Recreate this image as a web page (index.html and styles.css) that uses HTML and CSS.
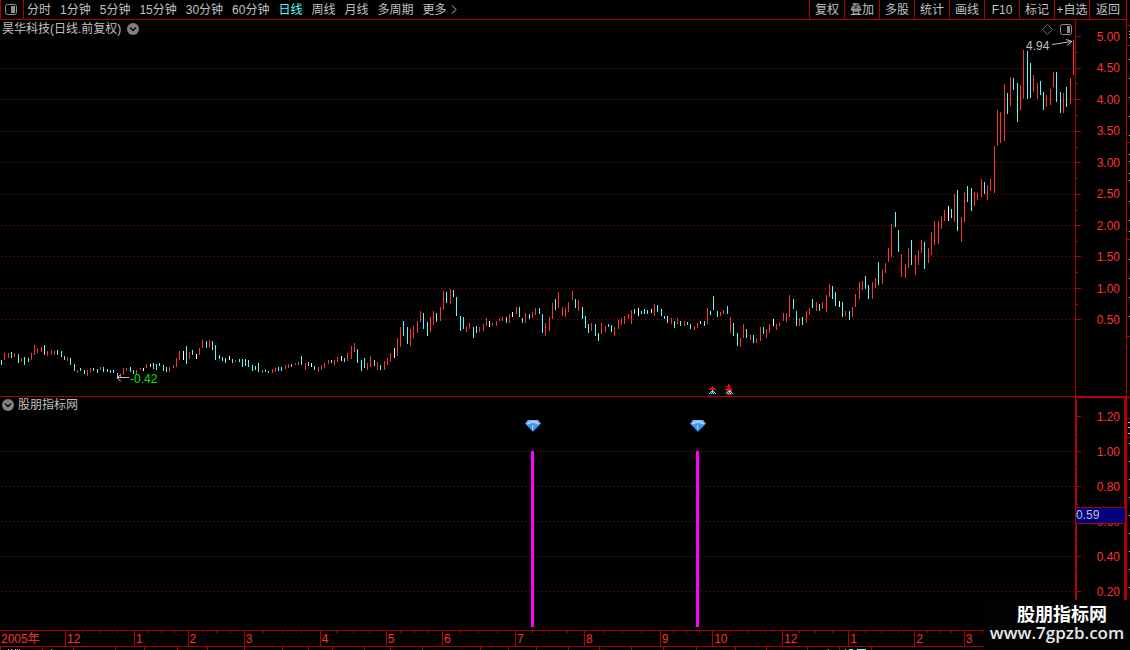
FILE: index.html
```html
<!DOCTYPE html>
<html lang="zh-CN">

<head>
    <meta charset="UTF-8">
    <meta name="viewport" content="width=device-width, initial-scale=1.0">
    <title>昊华科技</title>
    <link rel="stylesheet" href="styles.css">
</head>

<body>
    <div class="app">
        <header class="toolbar">
            <button class="layout-button" aria-label="布局">
                <svg width="12" height="11" viewBox="0 0 12 11">
                    <rect x="0.5" y="0.5" width="11" height="10" rx="2" fill="none" stroke="#909090" />
                    <rect x="6" y="2" width="4" height="7" fill="#909090" />
                </svg>
            </button>
            <nav class="periods">
                <a href="#">分时</a>
                <a href="#">1分钟</a>
                <a href="#">5分钟</a>
                <a href="#">15分钟</a>
                <a href="#">30分钟</a>
                <a href="#">60分钟</a>
                <a href="#" class="active">日线</a>
                <a href="#">周线</a>
                <a href="#">月线</a>
                <a href="#">多周期</a>
                <a href="#" class="more">更多
                    <svg width="6" height="9" viewBox="0 0 6 9">
                        <path d="M1 0.5l4 4l-4 4" fill="none" stroke="#c0c0c0" />
                    </svg>
                </a>
            </nav>
            <div class="tools">
                <button>复权</button>
                <button>叠加</button>
                <button>多股</button>
                <button>统计</button>
                <button>画线</button>
                <button>F10</button>
                <button>标记</button>
                <button>+自选</button>
                <button>返回</button>
            </div>
        </header>

        <section class="panel price-panel">
            <div class="plot">
                <svg class="chart" viewBox="0 20 1075 376">
                    <g class="grid">
                        <path
                            d="M1 68.5H1075M1 99.5H1075M1 131.5H1075M1 162.5H1075M1 194.5H1075M1 225.5H1075M1 256.5H1075M1 288.5H1075M1 319.5H1075" />
                    </g>
                    <g id="bars" class="bars"></g>

                    <!-- high and low markers -->
                    <path class="pointer" d="M1052 44.5l20 -3M1066 39.5l6 2l-5 4" />
                    <text class="high" x="1026" y="50">4.94</text>
                    <path class="pointer" d="M129 377.5h-12M121 374.5l-4 3l4 4M117.5 374v4" />
                    <text class="low" x="130" y="383">-0.42</text>

                    <!-- event markers -->
                    <path class="event-red" d="M712 386h1v1h1v1h1v1h1v1h-7v-1h1v-1h1v-1h1z" />
                    <path class="event-cyan" d="M712 390h1v1h1v1h1v1h1v1h-7v-1h1v-1h1v-1h1z" />
                    <path class="event-red" d="M728 384h1v1h1v1h1v1h-1v1h1v1h1v1h-7v-1h2v-1h1v-1h-2v-1h2z" />
                    <path class="event-red" d="M726 390h6v5h-5z" />
                    <path class="event-cyan" d="M729 390h1v1h1v1h1v1h1v1h-7v-1h1v-1h1v-1h1z" />
                    <path class="event-blue"
                        d="M711 392.5h1m1 0h1M710 393.5h1m1 0h1m1 0h1M728 392.5h1m1 0h1M727 393.5h1m1 0h1m1 0h1" />
                </svg>
                <div class="panel-title">
                    <h1>昊华科技(日线.前复权)</h1>
                    <button class="round" aria-label="展开">
                        <svg width="12" height="12" viewBox="0 0 12 12">
                            <circle cx="6" cy="6" r="6" fill="#808080" />
                            <path d="M3 4.5l3 3l3 -3" fill="none" stroke="#000" stroke-width="1.3" />
                        </svg>
                    </button>
                </div>
                <div class="panel-icons">
                    <svg width="11" height="11" viewBox="0 0 11 11">
                        <path d="M5.5 0.5l5 5l-5 5l-5 -5z" fill="none" stroke="#707070" />
                    </svg>
                    <svg width="12" height="11" viewBox="0 0 12 11">
                        <rect x="0.5" y="0.5" width="11" height="10" rx="2" fill="none" stroke="#909090" />
                        <rect x="7" y="2" width="3" height="7" fill="#909090" />
                    </svg>
                </div>
            </div>
            <div class="scale">
                <svg class="ticks" width="6" height="376" viewBox="0 20 6 376">
                    <path
                        d="M0 36.5h5M0 52.5h2M0 68.5h5M0 83.5h2M0 99.5h5M0 115.5h2M0 131.5h5M0 147.5h2M0 162.5h5M0 178.5h2M0 194.5h5M0 210.5h2M0 225.5h5M0 241.5h2M0 256.5h5M0 272.5h2M0 288.5h5M0 304.5h2M0 319.5h5" />
                </svg>
                <ol class="labels price-labels">
                    <li>5.00</li>
                    <li>4.50</li>
                    <li>4.00</li>
                    <li>3.50</li>
                    <li>3.00</li>
                    <li>2.50</li>
                    <li>2.00</li>
                    <li>1.50</li>
                    <li>1.00</li>
                    <li>0.50</li>
                </ol>
            </div>
        </section>

        <section class="panel indicator-panel">
            <div class="plot">
                <svg class="chart" viewBox="0 397 1075 233">
                    <defs>
                        <linearGradient id="gem" x1="0" y1="0" x2="0" y2="1">
                            <stop offset="0" stop-color="#8fb4f4" />
                            <stop offset="0.5" stop-color="#3c96f0" />
                            <stop offset="1" stop-color="#2a6fd8" />
                        </linearGradient>
                        <symbol id="diamond" viewBox="0 0 16 12">
                            <path d="M3 0h10l3 3.5L8 12L0 3.5z" fill="url(#gem)" />
                            <path d="M2.5 4Q8 -0.5 13.5 4" fill="none" stroke="#d8eaff" stroke-width="1.2" />
                            <path d="M4 5.5L8 3.5L12 5.5L8 11z" fill="#2f9bf5" />
                            <path d="M7.5 5v5" stroke="#a8d8ff" />
                        </symbol>
                    </defs>
                    <g class="grid">
                        <path
                            d="M1 451.5H1075M1 486.5H1075M1 521.5H1075M1 556.5H1075M1 591.5H1075" />
                    </g>
                    <rect class="signal" x="531" y="451" width="3" height="176" />
                    <rect class="signal" x="696" y="451" width="3" height="176" />
                    <use href="#diamond" x="525" y="420" width="16" height="12" />
                    <use href="#diamond" x="690" y="420" width="16" height="12" />
                </svg>
                <div class="panel-title indicator-title">
                    <button class="round" aria-label="展开">
                        <svg width="12" height="12" viewBox="0 0 12 12">
                            <circle cx="6" cy="6" r="6" fill="#808080" />
                            <path d="M3 4.5l3 3l3 -3" fill="none" stroke="#000" stroke-width="1.3" />
                        </svg>
                    </button>
                    <h2>股朋指标网</h2>
                </div>
            </div>
            <div class="scale">
                <svg class="ticks" width="6" height="233" viewBox="0 397 6 233">
                    <path
                        d="M0 416.5h4M0 434.5h1M0 451.5h4M0 469.5h1M0 486.5h4M0 504.5h1M0 521.5h4M0 539.5h1M0 556.5h4M0 574.5h1M0 591.5h4M0 609.5h1" />
                </svg>
                <ol class="labels indicator-labels">
                    <li>1.20</li>
                    <li>1.00</li>
                    <li>0.80</li>
                    <li>0.60</li>
                    <li>0.40</li>
                    <li>0.20</li>
                </ol>
                <div class="current-value">0.59</div>
            </div>
        </section>

        <ol class="timeline" id="timeline"></ol>

        <svg class="ticker" viewBox="0 647 1126 3">
            <path class="ticker-red"
                d="M0.5 647v3M42.5 647v3M73.5 647v3M115.5 647v3M144.5 647v3M177.5 647v3M207.5 647v3M244.5 647v3M282.5 647v3M308.5 647v3M332.5 647v3M364.5 647v3M390.5 647v3M422.5 647v3M480.5 647v3M508.5 647v3M536.5 647v3M568.5 647v3M599.5 647v3M631.5 647v3M663.5 647v3M696.5 647v3M735.5 647v3M766.5 647v3M807.5 647v3M839.5 647v3M871.5 647v3" />
            <path class="ticker-grey" d="M8 649.5h1m2 0h1m3 0h1m1 0h1m1 0h1m31 0h1M828 649.5h1m16 0h1" />
            <path class="ticker-cyan" d="M849 649.5h4m4 0h9" />
        </svg>
    </div>

    <div class="edge">
        <svg width="3" height="650" viewBox="0 0 3 650">
            <path class="ticker-red" d="M0 25.5h3M0 45.5h3M0 142.5h3M0 239.5h3M0 336.5h3M0 397.5h3M0 418.5h3M0 437.5h3" />
            <path class="ticker-grey"
                d="M2 31.5h1M2 34.5h1M2 37.5h1M2 59.5h1M2 78.5h1M2 97.5h1M2 116.5h1M2 135.5h1M2 154.5h1M2 161.5h1M2 173.5h1M2 180.5h1M2 201.5h1M2 220.5h1M2 231.5h1M2 259.5h1M2 278.5h1M2 297.5h1M2 316.5h1M1 422.5h2M1 427.5h2M1 433.5h2M2 443.5h1M2 461.5h1M2 479.5h1M2 497.5h1M2 515.5h1M2 533.5h1M2 551.5h1M2 569.5h1M2 587.5h1" />
        </svg>
    </div>

    <div class="watermark">
        <strong>股朋指标网</strong>
        <span>www.7gpzb.com</span>
    </div>

    <script src="chart.js"></script>
</body>

</html>
```

FILE: styles.css
```css
:root {
    --line: #b00000;
    --grid: #9c0c0c;
    --red: #ff3232;
    --cyan: #54fcfc;
    --text: #c0c0c0;
}

* {
    box-sizing: border-box;
}

body {
    display: flex;
    position: relative;
    min-height: 100vh;
    margin: 0;
    background: #000;
    color: var(--text);
    font-family: "Liberation Sans", "Noto Sans CJK SC", sans-serif;
    font-size: 12px;
    line-height: 16px;
}

svg {
    display: block;
}

h1,
h2 {
    margin: 0;
    font-size: 12px;
    font-weight: normal;
}

ol {
    list-style: none;
    margin: 0;
    padding: 0;
}

a {
    color: inherit;
    text-decoration: none;
}

button {
    padding: 0;
    border: 0;
    background: none;
    color: inherit;
    font: inherit;
    cursor: pointer;
}

.app {
    flex: 1;
    min-width: 0;
    display: flex;
    flex-direction: column;
}

/* toolbar */
.toolbar {
    display: flex;
    height: 20px;
    border-bottom: 1px solid var(--line);
}

.layout-button {
    display: flex;
    align-items: center;
    padding-left: 4px;
    width: 24px;
    border: solid var(--line);
    border-width: 0 1px;
}

.periods {
    display: flex;
    flex: 1;
    align-items: center;
    gap: 9px;
    padding-left: 3px;
    white-space: nowrap;
}

.periods .active {
    color: var(--cyan);
}

.more {
    display: flex;
    align-items: center;
    gap: 4px;
}

.tools {
    display: flex;
}

.tools button {
    width: 35px;
    border-left: 1px solid var(--line);
    white-space: nowrap;
}

.tools button:last-child {
    width: 37px;
}

/* panels */
.panel {
    display: flex;
}

.price-panel {
    border-bottom: 1px solid var(--line);
}

.plot {
    position: relative;
    flex: 1;
    min-width: 0;
}

.chart {
    width: 100%;
}

.grid path {
    fill: none;
    stroke: var(--grid);
    stroke-dasharray: 1 3;
}

.bars {
    shape-rendering: crispEdges;
}

.up {
    fill: var(--red);
}

.down {
    fill: var(--cyan);
}

.flat {
    fill: #fff;
}

.pointer {
    fill: none;
    stroke: var(--text);
}

.high {
    fill: var(--text);
}

.low {
    fill: #00e600;
}

.event-red {
    fill: #f00;
}

.event-cyan {
    fill: var(--cyan);
}

.event-blue {
    stroke: #0020c0;
}

.signal {
    fill: #f0f;
}

.panel-title {
    position: absolute;
    top: 1px;
    left: 2px;
    display: flex;
    align-items: center;
    gap: 6px;
}

.indicator-title {
    top: 0;
    gap: 4px;
}

.panel-icons {
    position: absolute;
    top: 4px;
    right: 3px;
    display: flex;
    gap: 7px;
}

/* value scales */
.scale {
    position: relative;
    display: flex;
    justify-content: space-between;
    width: 51px;
    border-left: 1px solid var(--line);
}

.ticks {
    fill: none;
    stroke: var(--line);
}

.labels {
    display: flex;
    flex-direction: column;
    justify-content: space-between;
    padding-right: 6px;
    color: var(--red);
}

.price-labels {
    height: 299px;
    margin-top: 9px;
}

.indicator-panel .scale {
    border: solid var(--line);
    border-width: 0 2px;
    box-shadow: inset 0 1px var(--line);
}

.indicator-labels {
    height: 191px;
    margin-top: 12px;
    padding-right: 4px;
}

.current-value {
    position: absolute;
    top: 110px;
    left: -1px;
    right: -1px;
    height: 17px;
    border: solid var(--line);
    border-width: 1px 0;
    background: #000080;
    line-height: 15px;
}

/* dates */
.timeline {
    display: flex;
    height: 17px;
    border: solid var(--line);
    border-width: 1px 0;
    color: var(--red);
}

.month {
    flex-basis: 0;
    min-width: 0;
    position: relative;
    padding-left: 1px;
    border-left: 1px solid var(--line);
}

.month:first-child {
    border-left: 0;
}

.weeks {
    position: absolute;
    inset: 0;
    display: flex;
    justify-content: space-evenly;
}

.weeks i {
    width: 1px;
    height: 2px;
    background: var(--line);
}

.ticker {
    width: 100%;
}

.ticker-red {
    stroke: var(--line);
}

.ticker-grey {
    stroke: var(--text);
}

.ticker-cyan {
    stroke: var(--cyan);
}

.edge {
    width: 4px;
    border-left: 1px solid var(--line);
}

.watermark {
    position: absolute;
    right: 0;
    bottom: 0;
    display: flex;
    flex-direction: column;
    align-items: center;
    width: 146px;
    height: 50px;
    padding-top: 3px;
    background: #030303;
    color: #fff;
}

.watermark strong {
    padding-left: 10px;
    font-family: "Noto Sans CJK SC", sans-serif;
    font-size: 18px;
    line-height: 20px;
}

.watermark span {
    font-family: "Open Sans", sans-serif;
    font-size: 17px;
    font-weight: 600;
    line-height: 20px;
    color: #e8e8e8;
}
```

FILE: chart.js
```js
// x, high, low, direction: u = up, d = down, f = flat
const data = `
1 360 365 d,4 353 360 u,8 353 358 u,11 352 358 d,14 353 357 u,18 354 363 d,21 358 362 u,24 357 365 d,28 358 362 d,31 353 360 u,
34 345 355 u,37 348 353 u,41 347 352 u,44 345 355 d,47 351 356 u,51 350 355 u,54 351 355 u,57 350 355 d,61 351 357 d,64 356 360 d,
67 357 361 u,70 358 365 d,74 364 371 d,77 370 373 u,80 368 371 d,84 370 374 d,87 370 376 u,90 368 372 u,93 368 371 d,97 369 373 d,
100 367 370 u,103 367 372 d,107 369 372 d,110 370 373 d,113 370 373 d,117 373 379 d,120 374 378 u,123 368 375 u,126 368 371 u,130 367 372 d,
133 370 374 d,136 370 374 u,140 368 370 u,143 368 371 f,146 364 368 u,150 364 367 f,153 363 369 d,156 364 370 d,159 363 366 d,163 365 371 d,
166 367 372 d,169 367 372 u,173 365 368 u,176 358 367 u,179 351 360 u,183 351 360 f,186 346 364 d,189 352 359 u,192 350 355 d,196 354 359 f,
199 348 355 u,202 340 348 u,206 341 348 d,209 340 348 u,212 341 350 d,215 345 360 d,219 355 359 d,222 357 361 d,225 358 363 d,229 356 360 f,
232 359 363 d,235 360 362 u,239 359 362 d,242 359 367 d,245 359 366 d,248 360 367 d,252 365 371 d,255 366 370 d,258 363 372 d,262 370 373 u,
265 370 372 d,268 371 373 d,272 369 373 u,275 368 372 u,278 367 371 d,281 367 371 d,285 365 369 u,288 364 368 u,291 364 367 d,295 363 365 u,
298 362 365 u,301 356 365 d,305 363 370 u,308 362 366 d,311 363 367 f,314 366 370 d,318 367 372 u,321 365 370 u,324 363 368 u,328 360 364 u,
331 360 363 d,334 360 365 u,337 357 362 u,341 356 361 f,344 358 362 d,347 353 361 u,351 346 359 u,354 343 352 u,357 349 363 d,361 360 371 d,
364 358 368 d,367 363 370 u,370 356 367 u,374 360 366 d,377 362 370 u,380 365 370 d,384 361 370 u,387 358 365 u,390 353 362 u,394 348 358 f,
397 338 356 u,400 327 347 u,403 321 336 d,407 327 344 d,410 329 346 u,413 326 338 u,417 321 333 u,420 311 322 u,423 313 329 d,427 322 336 d,
430 317 332 u,433 311 325 u,436 313 322 d,440 307 321 u,443 291 310 u,446 292 303 d,450 289 304 u,453 290 297 d,456 297 316 d,460 316 331 d,
463 317 329 d,466 326 332 u,469 323 329 u,473 327 338 d,476 326 333 d,479 327 332 u,483 324 331 u,486 318 326 u,489 321 327 f,492 323 326 u,
496 321 326 u,499 318 321 u,502 317 321 u,506 317 323 d,509 314 323 u,512 312 317 f,516 307 314 u,519 307 317 d,522 318 323 d,525 313 323 u,
529 314 319 d,532 312 318 u,535 308 315 u,539 308 314 d,542 314 333 d,545 323 336 u,549 317 331 u,552 303 319 u,555 299 310 d,558 292 308 u,
562 307 316 u,565 308 317 u,568 302 312 u,572 291 300 u,575 299 308 d,578 300 311 u,582 307 319 d,585 316 328 d,588 324 333 d,591 323 331 u,
595 324 336 d,598 333 341 d,601 323 334 u,605 326 332 u,608 324 327 d,611 325 332 d,614 327 336 u,618 320 329 u,621 318 325 u,624 316 324 u,
628 314 319 u,631 310 324 u,634 309 314 d,638 308 316 f,641 311 314 d,644 309 314 d,647 310 314 d,651 309 313 f,654 304 316 u,657 305 312 d,
661 309 316 d,664 316 319 d,667 316 323 d,671 318 324 u,674 321 328 d,677 318 324 u,680 321 326 d,684 321 326 u,687 322 325 d,690 324 329 d,
694 326 330 u,697 323 328 u,700 321 324 f,704 321 326 d,707 308 324 u,710 311 315 d,713 296 310 d,717 311 317 d,720 312 316 u,723 310 314 u,
727 306 314 d,730 317 333 u,733 323 336 d,737 333 346 d,740 338 347 u,743 324 338 u,746 329 338 d,750 335 340 u,753 335 343 d,756 338 343 u,
760 327 341 u,763 327 334 d,766 329 338 u,769 324 333 u,773 319 326 f,776 324 330 u,779 323 326 u,783 313 321 u,786 313 322 u,789 295 317 u,
793 299 309 d,796 311 326 d,799 318 326 u,802 317 325 d,806 311 323 u,809 308 315 u,812 299 308 d,816 302 311 u,819 304 311 d,822 302 309 u,
826 295 312 u,829 284 297 u,832 286 299 d,835 292 306 d,839 301 307 f,842 302 317 d,845 311 316 u,849 311 320 d,852 307 317 u,855 294 307 u,
859 282 299 u,862 281 290 u,865 276 289 d,868 285 299 d,872 282 299 u,875 278 288 u,878 262 285 d,882 270 284 u,885 263 273 u,888 248 262 u,
891 224 257 u,895 212 227 d,898 230 252 d,901 254 277 u,905 264 278 u,908 248 268 u,911 240 265 d,915 255 275 u,918 250 265 u,921 240 253 u,
924 242 269 d,928 248 263 u,931 232 255 u,934 221 245 u,938 221 244 u,941 216 229 u,944 210 221 u,948 206 221 f,951 209 218 d,954 194 222 u,
957 190 231 d,961 217 242 u,964 192 222 u,967 186 202 d,971 188 211 d,974 192 206 u,977 193 200 u,981 179 197 u,984 182 194 d,987 185 200 u,
990 179 191 u,994 146 193 u,997 110 146 u,1000 112 143 u,1004 84 141 u,1007 93 114 d,1010 77 106 u,1013 78 90 d,1017 83 122 d,1020 85 110 u,
1023 50 99 u,1027 51 99 d,1030 63 98 d,1033 75 92 u,1037 83 99 u,1040 81 95 d,1043 92 110 d,1046 95 107 u,1050 89 105 u,1053 72 87 u,
1056 72 102 d,1060 92 113 d,1063 93 113 u,1066 87 107 d,1070 78 104 u,1073 40 75 u`;

const classes = { u: 'up', d: 'down', f: 'flat' };

document.getElementById('bars').innerHTML = data.trim().split(',').map(row => {
    const [x, high, low, dir] = row.trim().split(' ');
    return `<rect class="${classes[dir]}" x="${x}" y="${high}" width="1" height="${low - high}"/>`;
}).join('');

// label and width share of every month on the time axis
const months = [
    ['2005年', 66], ['12', 69], ['1', 53], ['2', 56], ['3', 76], ['4', 66], ['5', 56], ['6', 73], ['7', 69],
    ['8', 76], ['9', 52], ['10', 70], ['12', 66], ['1', 66], ['2', 49], ['3', 72], ['', 91]
];

document.getElementById('timeline').innerHTML = months.map(([label, share], i) =>
    `<li class="month" style="flex-grow: ${share}">${label}` +
    (i ? '<span class="weeks"><i></i><i></i><i></i></span>' : '') + '</li>'
).join('');
```
